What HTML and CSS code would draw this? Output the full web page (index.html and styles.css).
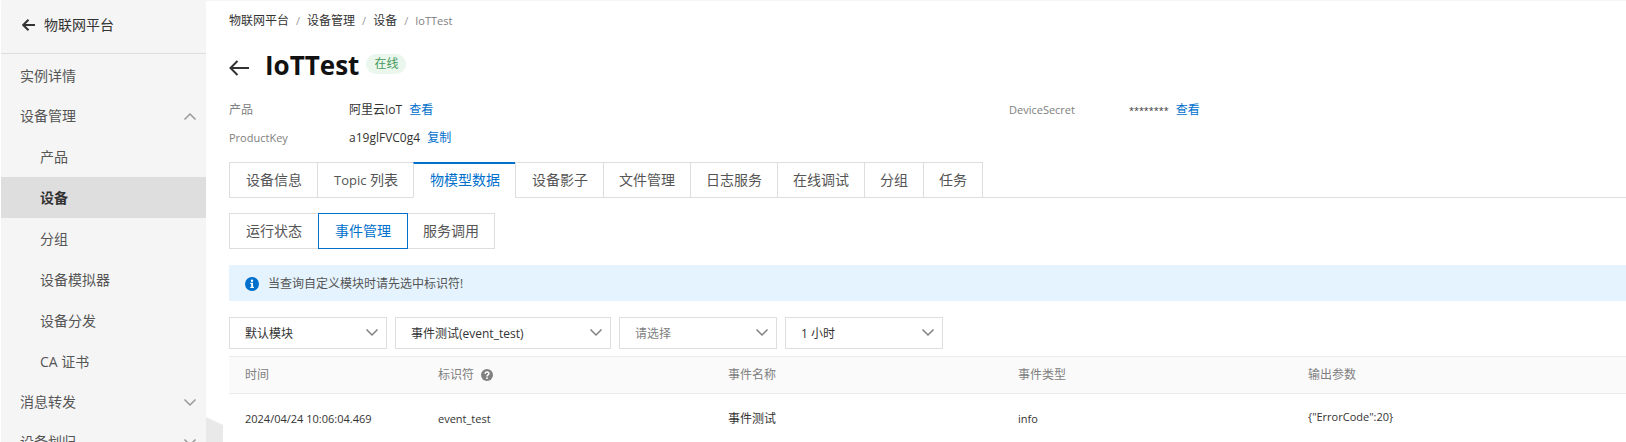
FILE: index.html
```
<!DOCTYPE html>
<html lang="zh-CN">
<head>
    <meta charset="UTF-8">
    <meta name="viewport" content="width=device-width, initial-scale=1.0">
    <title>物联网平台 - IoTTest</title>
    <link rel="stylesheet" href="styles.css">
</head>
<body>
    <div class="layout">
        <aside class="sidebar">
            <a href="#" class="sidebar-header">
                <svg class="back-small" viewBox="0 0 14 12"><path d="M13 6H2M6.500 .8L1.200 6 6.500 11.200"/></svg>
                物联网平台
            </a>
            <nav class="menu">
                <a href="#" class="menu-item">实例详情</a>
                <a href="#" class="menu-item">设备管理
                    <svg class="chevron" viewBox="0 0 12 7"><path d="M.5 6.5L6 1l5.5 5.5"/></svg>
                </a>
                <div class="submenu">
                    <a href="#" class="submenu-item">产品</a>
                    <a href="#" class="submenu-item active">设备</a>
                    <a href="#" class="submenu-item">分组</a>
                    <a href="#" class="submenu-item">设备模拟器</a>
                    <a href="#" class="submenu-item">设备分发</a>
                    <a href="#" class="submenu-item">CA 证书</a>
                </div>
                <a href="#" class="menu-item">消息转发
                    <svg class="chevron" viewBox="0 0 12 7"><path d="M.5.5L6 6 11.5.5"/></svg>
                </a>
                <a href="#" class="menu-item">设备划归
                    <svg class="chevron" viewBox="0 0 12 7"><path d="M.5.5L6 6 11.5.5"/></svg>
                </a>
            </nav>
        </aside>
        <span class="collapse-handle"></span>

        <main class="content">
            <nav class="breadcrumb">
                <a href="#">物联网平台</a><span class="sep">/</span>
                <a href="#">设备管理</a><span class="sep">/</span>
                <a href="#">设备</a><span class="sep">/</span>
                <span class="current latin">IoTTest</span>
            </nav>

            <header class="title-bar">
                <a href="#" class="back-link" aria-label="返回">
                    <svg class="back-large" viewBox="0 0 20 16"><path d="M20 8H2M8.5 1L1.5 8l7 7"/></svg>
                </a>
                <h1>IoTTest</h1>
                <span class="status">在线</span>
            </header>

            <dl class="info">
                <div class="info-row">
                    <dt>产品</dt>
                    <dd>阿里云IoT <a href="#">查看</a></dd>
                </div>
                <div class="info-row">
                    <dt class="latin">DeviceSecret</dt>
                    <dd><span class="secret">********</span> <a href="#">查看</a></dd>
                </div>
                <div class="info-row">
                    <dt class="latin">ProductKey</dt>
                    <dd>a19glFVC0g4 <a href="#">复制</a></dd>
                </div>
            </dl>

            <div class="tabs">
                <button class="tab">设备信息</button>
                <button class="tab"><span class="tab-latin">Topic</span> 列表</button>
                <button class="tab active">物模型数据</button>
                <button class="tab">设备影子</button>
                <button class="tab">文件管理</button>
                <button class="tab">日志服务</button>
                <button class="tab">在线调试</button>
                <button class="tab">分组</button>
                <button class="tab">任务</button>
            </div>

            <div class="segments">
                <button class="segment">运行状态</button>
                <button class="segment active">事件管理</button>
                <button class="segment">服务调用</button>
            </div>

            <div class="notice">
                <svg class="notice-icon" viewBox="0 0 14 14">
                    <circle class="disc" cx="7" cy="7" r="7"/>
                    <circle class="mark" cx="7" cy="3.7" r="1.2"/>
                    <path class="mark" d="M5.3 5.8H8v4h.9v1.2H5.3V9.8h.9V7h-.9z"/>
                </svg>
                当查询自定义模块时请先选中标识符!
            </div>

            <form class="filters">
                <div class="select">
                    <select aria-label="模块"><option>默认模块</option></select>
                    <svg class="chevron" viewBox="0 0 12 7"><path d="M.5.5L6 6 11.5.5"/></svg>
                </div>
                <div class="select wide">
                    <select aria-label="事件"><option>事件测试(event_test)</option></select>
                    <svg class="chevron" viewBox="0 0 12 7"><path d="M.5.5L6 6 11.5.5"/></svg>
                </div>
                <div class="select">
                    <select class="placeholder" aria-label="事件类型"><option>请选择</option></select>
                    <svg class="chevron" viewBox="0 0 12 7"><path d="M.5.5L6 6 11.5.5"/></svg>
                </div>
                <div class="select">
                    <select aria-label="时间范围"><option>1 小时</option></select>
                    <svg class="chevron" viewBox="0 0 12 7"><path d="M.5.5L6 6 11.5.5"/></svg>
                </div>
            </form>

            <table class="events">
                <thead>
                    <tr>
                        <th class="col-time">时间</th>
                        <th class="col-event">标识符
                            <svg class="help-icon" viewBox="0 0 12 12">
                                <circle class="disc" cx="6" cy="6" r="6"/>
                                <path class="stroke" d="M4.2 4.8c0-2.4 3.7-2.3 3.7-.2C7.9 5.9 6 5.8 6 7.4"/>
                                <circle class="mark" cx="6" cy="9.2" r=".9"/>
                            </svg>
                        </th>
                        <th class="col-event">事件名称</th>
                        <th class="col-event">事件类型</th>
                        <th>输出参数</th>
                    </tr>
                </thead>
                <tbody>
                    <tr>
                        <td class="latin">2024/04/24 10:06:04.469</td>
                        <td class="latin">event_test</td>
                        <td>事件测试</td>
                        <td class="latin">info</td>
                        <td class="latin output">{"ErrorCode":20}</td>
                    </tr>
                </tbody>
            </table>
        </main>
    </div>
</body>
</html>
```

FILE: styles.css
```
* {
    margin: 0;
    padding: 0;
    box-sizing: border-box;
}

body {
    font-family: "Open Sans", "Noto Sans CJK SC", sans-serif;
    font-size: 12px;
    line-height: 18px;
    color: #333;
    background: #fff;
}

a {
    color: #0070cc;
    text-decoration: none;
}

button,
select {
    font-family: inherit;
    color: inherit;
}

svg {
    fill: none;
    stroke: currentColor;
    flex: none;
}

.latin {
    font-size: 11px;
}

.layout {
    display: flex;
    height: 100vh;
    overflow: hidden;
    border-top: 1px solid #f5f5f5;
}

/* Sidebar */
.sidebar {
    flex: none;
    width: 206px;
    border-left: 1px solid #fff;
    background: #f5f5f5;
    font-size: 14px;
    overflow: hidden;
}

.sidebar-header {
    display: flex;
    align-items: center;
    gap: 8px;
    height: 53px;
    padding: 0 21px 4px;
    border-bottom: 1px solid #dedede;
    color: #333;
}

.back-small {
    width: 14px;
    height: 12px;
    stroke-width: 2;
}

.menu {
    padding-top: 2px;
}

.menu-item,
.submenu-item {
    display: flex;
    align-items: center;
    color: #555;
}

.menu-item {
    justify-content: space-between;
    height: 40px;
    padding: 0 10px 0 19px;
}

.submenu-item {
    height: 41px;
    padding-left: 39px;
}

.submenu-item.active {
    background: #dedede;
    color: #333;
    font-weight: 700;
}

.chevron {
    width: 12px;
    height: 7px;
    color: #999;
    stroke-width: 1.5;
    overflow: visible;
}

.collapse-handle {
    position: fixed;
    left: 206px;
    bottom: -35px;
    width: 17px;
    height: 60px;
    background: #e9e9e9;
    clip-path: polygon(0 0, 100% 8px, 100% 52px, 0 100%);
}

/* Page header */
.content {
    flex: 1;
    min-width: 0;
    padding: 11px 0 0 23px;
}

.breadcrumb {
    display: flex;
    align-items: center;
    height: 18px;
}

.breadcrumb a {
    color: #333;
}

.breadcrumb .sep {
    margin: 0 7px;
    color: #999;
    font-size: 11px;
}

.breadcrumb .current {
    color: #808080;
}

.title-bar {
    display: flex;
    align-items: center;
    height: 36px;
    margin-top: 17px;
}

.back-link {
    display: flex;
    padding-top: 6px;
    margin-right: 16px;
    color: #333;
}

.back-large {
    width: 20px;
    height: 16px;
    stroke-width: 2;
}

h1 {
    color: #111;
    font-size: 26px;
    line-height: 36px;
}

.status {
    height: 20px;
    margin: 0 0 3px 7px;
    padding: 0 8px;
    border-radius: 10px;
    background: #ebf6ed;
    color: #459a5b;
    line-height: 20px;
}

.info {
    display: grid;
    grid-template-columns: 780px 1fr;
    row-gap: 7px;
    margin: 17px 0 14px;
}

.info-row {
    display: flex;
    line-height: 20px;
}

.info dt {
    width: 120px;
    color: #808080;
}

.info dd a {
    margin-left: 4px;
}

.secret {
    font-size: 9px;
}

/* Tabs */
.tabs {
    display: flex;
    border-bottom: 1px solid #dedede;
}

.tab,
.segment {
    height: 36px;
    border: 1px solid #dedede;
    background: #fff;
    color: #555;
    font-size: 14px;
    cursor: pointer;
}

.tab {
    padding: 0 15px 3px;
    margin-bottom: -1px;
    border-right: 0;
}

.tab:nth-child(-n+4) {
    padding-left: 16px;
}

.tab-latin {
    font-size: 13px;
}

.tab:last-child {
    border-right: 1px solid #dedede;
}

.tab.active {
    border-top: 2px solid #0070cc;
    border-bottom-color: #fff;
    color: #0070cc;
}

.segments {
    display: flex;
    margin: 15px 0 16px;
}

.segment {
    padding: 0 16px 2px;
}

.segment + .segment {
    margin-left: -1px;
}

.segment:last-child {
    padding: 0 15px 2px;
}

.segment.active {
    position: relative;
    border-color: #0070cc;
    color: #0070cc;
}

.notice {
    display: flex;
    align-items: center;
    gap: 9px;
    height: 36px;
    padding: 1px 16px 0;
    background: #e4f3fe;
    color: #555;
}

.notice-icon {
    width: 14px;
    height: 14px;
}

.notice-icon *,
.help-icon .disc,
.help-icon .mark {
    stroke: none;
}

.notice-icon .disc {
    fill: #0070cc;
}

.mark {
    fill: #fff;
}

/* Filters */
.filters {
    display: flex;
    gap: 8px;
    margin: 16px 0 7px;
}

.select {
    position: relative;
    width: 158px;
}

.select.wide {
    width: 216px;
}

.select select {
    appearance: none;
    width: 100%;
    height: 32px;
    padding: 0 32px 0 15px;
    border: 1px solid #dedede;
    border-radius: 0;
    background: #fff;
    font-size: 12px;
}

.select .placeholder {
    color: #808080;
}

.select .chevron {
    position: absolute;
    top: 12px;
    right: 9px;
    color: #808080;
    pointer-events: none;
}

/* Events table */
.events {
    width: 100%;
    border-collapse: collapse;
    table-layout: fixed;
}

.events th,
.events td {
    padding: 0 16px;
    text-align: left;
}

.events th {
    height: 37px;
    border-top: 1px solid #ebebeb;
    border-bottom: 1px solid #ebebeb;
    background: #fafafa;
    color: #808080;
    font-weight: 400;
}

.events td {
    height: 50px;
}

.events .output {
    padding-bottom: 4px;
}

.col-time {
    width: 193px;
}

.col-event {
    width: 290px;
}

.help-icon {
    width: 12px;
    height: 12px;
    margin-left: 4px;
    vertical-align: -2px;
}

.help-icon .disc {
    fill: #808080;
}

.help-icon .stroke {
    stroke: #fff;
    stroke-width: 1.5;
}
```
